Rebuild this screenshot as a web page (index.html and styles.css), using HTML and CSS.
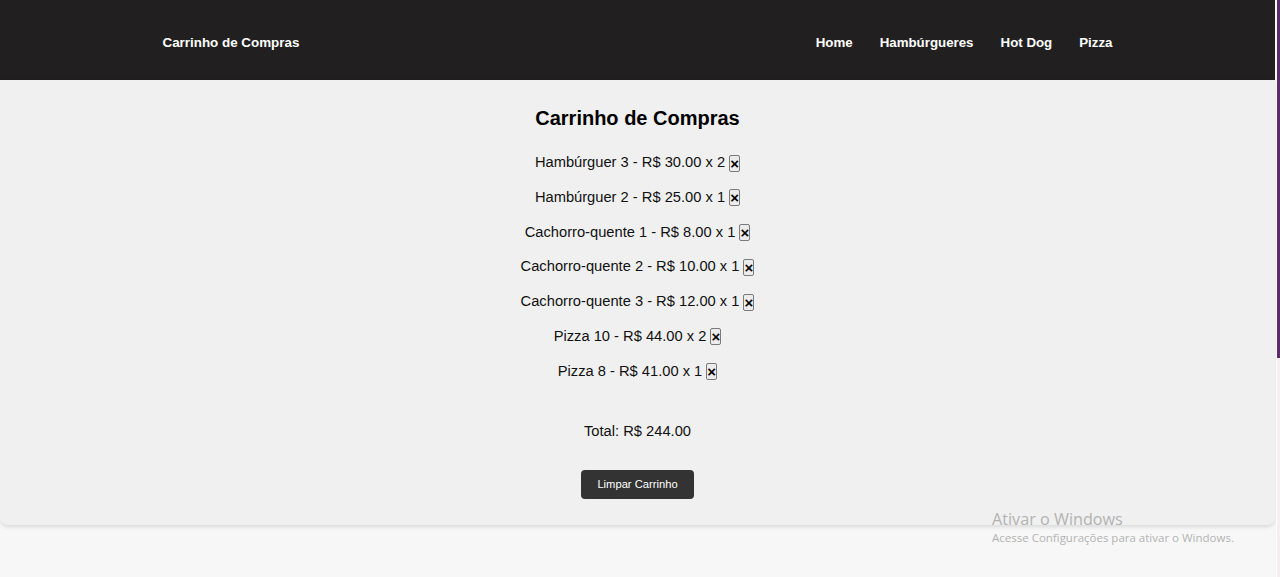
FILE: index.html
```html
<!DOCTYPE html>
<html lang="pt-BR">
<head>
<meta charset="utf-8">
<title>Carrinho de Compras</title>
<link rel="stylesheet" href="styles.css">
</head>
<body>
<div class="screen">
  <div class="page">
    <header class="topbar">
      <div class="topbar-inner">
        <span class="brand">Carrinho de Compras</span>
        <nav class="nav">
          <a href="#">Home</a>
          <a href="#">Hambúrgueres</a>
          <a href="#">Hot Dog</a>
          <a href="#">Pizza</a>
        </nav>
      </div>
    </header>
    <main class="cart">
      <h2 class="cart-title">Carrinho de Compras</h2>
      <ul class="cart-list">
        <li><span>Hambúrguer 3 - R$ 30.00 x 2</span><button class="remove">×</button></li>
        <li><span>Hambúrguer 2 - R$ 25.00 x 1</span><button class="remove">×</button></li>
        <li><span>Cachorro-quente 1 - R$ 8.00 x 1</span><button class="remove">×</button></li>
        <li><span>Cachorro-quente 2 - R$ 10.00 x 1</span><button class="remove">×</button></li>
        <li><span>Cachorro-quente 3 - R$ 12.00 x 1</span><button class="remove">×</button></li>
        <li><span>Pizza 10 - R$ 44.00 x 2</span><button class="remove">×</button></li>
        <li><span>Pizza 8 - R$ 41.00 x 1</span><button class="remove">×</button></li>
      </ul>
      <p class="total">Total: R$ 244.00</p>
      <button class="clear">Limpar Carrinho</button>
    </main>
  </div>
  <div class="edge"><div class="thumb"></div></div>
  <div class="watermark">
    <div class="wm-title">Ativar o Windows</div>
    <div class="wm-sub">Acesse Configurações para ativar o Windows.</div>
  </div>
</div>
</body>
</html>
```

FILE: styles.css
```css
html, body {
  margin: 0;
  padding: 0;
  height: 100%;
  overflow: hidden;
}
body {
  font-family: "Liberation Sans", Arial, sans-serif;
  background: #f7f7f7;
  color: #111;
}
.screen {
  display: grid;
  grid-template-columns: 1276px 4px;
  height: 577px;
  position: relative;
}
.page {
  display: flex;
  flex-direction: column;
}
.topbar {
  background: #211f1f;
  height: 80px;
  margin-right: 1px;
}
.topbar-inner {
  width: 950px;
  margin: 0 auto;
  height: 100%;
  box-sizing: border-box;
  padding-top: 4px;
  display: flex;
  align-items: center;
  justify-content: space-between;
}
.brand {
  color: #fff;
  font-weight: bold;
  font-size: 13.4px;
}
.nav {
  display: flex;
  gap: 27px;
}
.nav a {
  color: #fff;
  font-weight: bold;
  font-size: 13.3px;
  text-decoration: none;
}
.cart {
  background: #f0f0f0;
  margin-right: 1px;
  border-radius: 0 0 8px 8px;
  box-shadow: 0 2px 4px rgba(0, 0, 0, 0.12);
  padding: 27px 0 26px;
  display: flex;
  flex-direction: column;
  align-items: center;
}
.cart-title {
  margin: 0;
  font-size: 20px;
  font-weight: bold;
  color: #000;
}
.cart-list {
  list-style: none;
  margin: 23px 0 0;
  padding: 0;
  display: flex;
  flex-direction: column;
  align-items: center;
  gap: 16.75px;
}
.cart-list li {
  display: flex;
  align-items: center;
  gap: 4px;
  height: 18px;
  font-size: 14.7px;
  color: #111;
}
.remove {
  box-sizing: border-box;
  width: 11px;
  height: 17px;
  padding: 0;
  margin: 2px 0 0;
  border: 1px solid #7a7a7a;
  border-radius: 2px;
  background: #ececec;
  color: #000;
  font-family: "Liberation Sans", Arial, sans-serif;
  font-size: 15px;
  font-weight: bold;
  line-height: 15px;
  text-align: center;
  overflow: visible;
}
.total {
  margin: 42.5px 0 0;
  font-size: 14.7px;
  line-height: 18px;
  color: #111;
}
.clear {
  margin-top: 29.5px;
  width: 113px;
  height: 29px;
  padding: 0;
  border: none;
  border-radius: 4px;
  background: #333;
  color: #fff;
  font-family: "Liberation Sans", Arial, sans-serif;
  font-size: 11.2px;
  cursor: pointer;
}
.edge {
  background: #f6eef0;
  border-left: 1px solid #fff;
}
.thumb {
  height: 358px;
  background: #5b2c69;
}
.watermark {
  position: absolute;
  left: 992px;
  top: 509px;
  font-family: "Open Sans", "Noto Sans", sans-serif;
  color: #b3b3b3;
}
.wm-title {
  font-size: 16.2px;
  line-height: 20px;
}
.wm-sub {
  font-size: 11.5px;
  line-height: 16px;
  margin-top: 1px;
}
```
